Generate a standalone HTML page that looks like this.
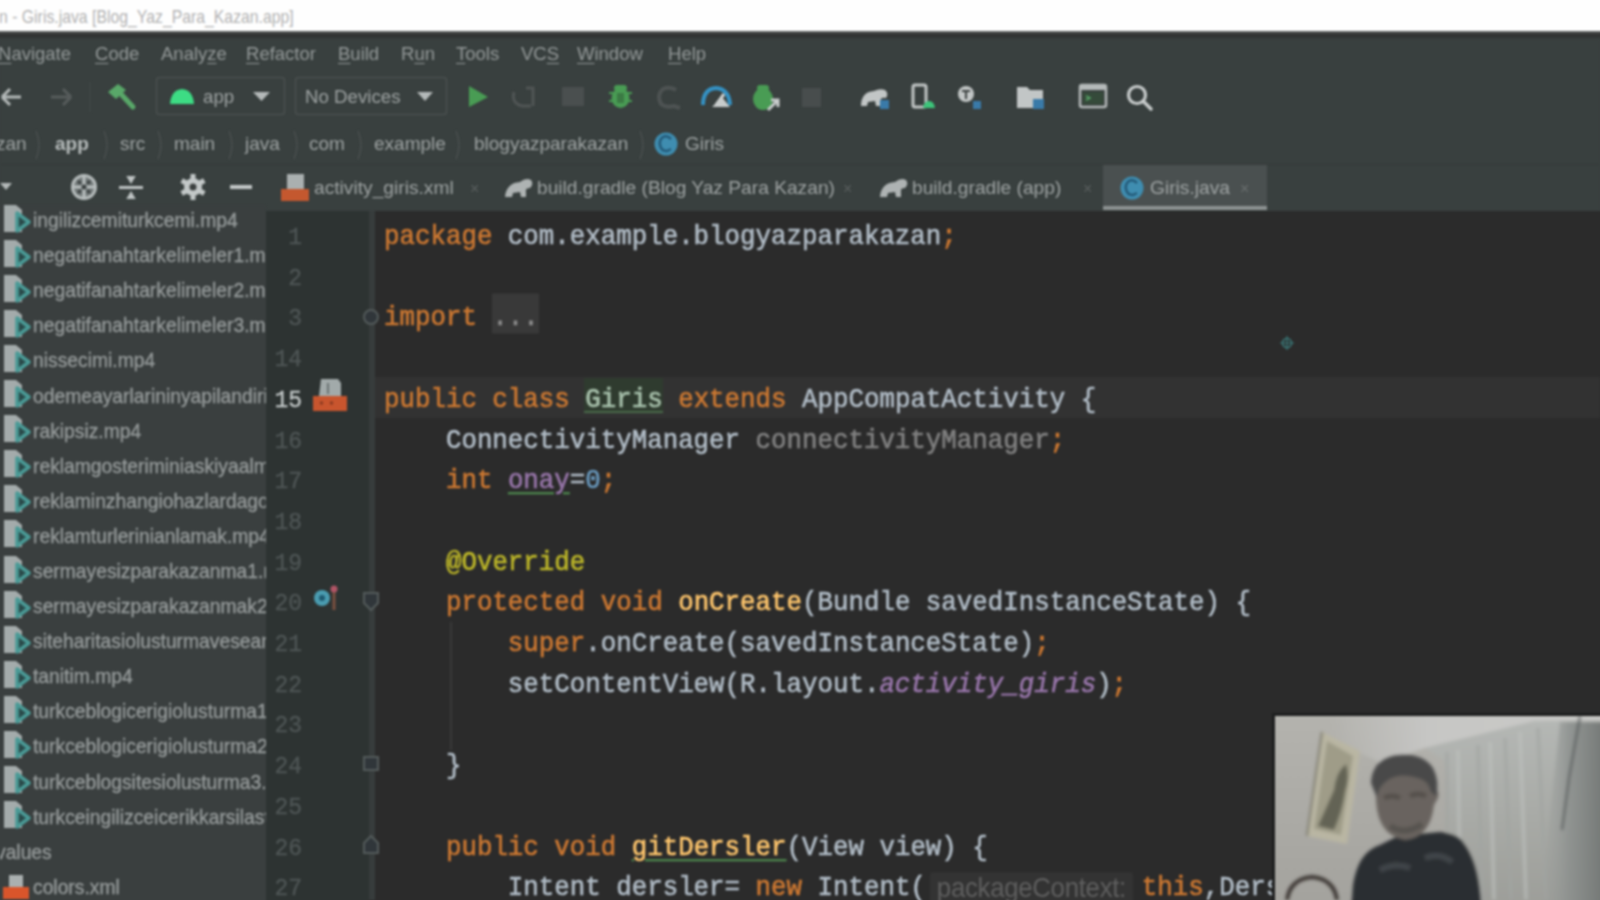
<!DOCTYPE html>
<html><head><meta charset="utf-8">
<style>
*{margin:0;padding:0;box-sizing:border-box}
html,body{width:1600px;height:900px;overflow:hidden;background:#39403f;font-family:"Liberation Sans",sans-serif}
.abs{position:absolute}
#root{position:absolute;left:-12px;top:-12px;width:1624px;height:924px;overflow:hidden;filter:blur(1.1px)}
#inner{position:absolute;left:12px;top:12px;width:1600px;height:900px}
#title{left:0;top:0;width:1600px;height:31px;background:#fefefe}
#title span{position:absolute;left:-1px;top:8px;font-size:15.8px;color:#b2b2b2;white-space:nowrap;transform:scaleY(1.12);transform-origin:0 50%}
#tborder{left:-12px;top:31px;width:1624px;height:8px;background:linear-gradient(#6a6c6c,#2f3131 40%,#333636 80%,#39403f)}
.menu{position:absolute;top:43px;font-size:18.5px;color:#949999;white-space:nowrap}
.menu u{text-underline-offset:3px}
.ui{position:absolute;font-size:18.5px;color:#9ea3a3;white-space:nowrap}
#editor{left:375px;top:211px;width:1225px;height:689px;background:#2b2b2b}
#gutter{left:266px;top:211px;width:103px;height:689px;background:#2d3332}
#gline{left:369px;top:211px;width:6px;height:689px;background:#373c3c}
#tree{left:0;top:205px;width:266px;height:695px;background:#3a3f3f}
.code{position:absolute;left:384px;font-family:"Liberation Mono",monospace;font-size:25.8px;color:#b1bcc6;white-space:pre;line-height:40px;margin-top:2px;-webkit-text-stroke:0.6px currentColor;transform:scaleY(1.08);transform-origin:0 70%}
.ln{position:absolute;margin-top:2px;width:36px;left:266px;text-align:right;font-family:"Liberation Mono",monospace;font-size:23px;color:#4f5656;line-height:40px;-webkit-text-stroke:0.3px currentColor}
.k{color:#cc7832}
.f{color:#9876aa}
.m{color:#ffc66d}
.n{color:#6897bb}
.an{color:#bbb529}
.gr{color:#808080}
.fold{background:#393939;color:#8c8c8c;padding-top:8px}
.cls{color:#a9c2ad}
.wav{text-decoration:underline;text-decoration-color:#4f8a4f;text-underline-offset:4px}
.hint{display:inline-block;vertical-align:top;margin:5px 9px 0 4px;width:203px;height:32px;line-height:28px;background:#333333;color:#5f5f5f;font-family:"Liberation Sans";font-size:25.8px;letter-spacing:-0.3px;-webkit-text-stroke:0;border-radius:3px;padding:0 0 0 7px;overflow:hidden}
.fname{position:absolute;margin-top:1.5px;left:33px;font-size:19.3px;color:#959a9a;white-space:nowrap;line-height:24px;-webkit-text-stroke:0.35px currentColor}
</style></head><body><div id="root"><div id="inner">
<div class="abs" style="left:-12px;top:-12px;width:1624px;height:43px;background:#fefefe"></div>
<div class="abs" style="left:-12px;top:39px;width:12px;height:900px;background:#39403f"></div>
<div class="abs" style="left:1600px;top:39px;width:12px;height:172px;background:#39403f"></div>
<div class="abs" style="left:1600px;top:211px;width:12px;height:502px;background:#2b2b2b"></div>
<div class="abs" style="left:1600px;top:713px;width:12px;height:200px;background:#7a7e7c"></div>
<div class="abs" style="left:-12px;top:900px;width:278px;height:12px;background:#3a3f3f"></div>
<div class="abs" style="left:266px;top:900px;width:103px;height:12px;background:#2d3332"></div>
<div class="abs" style="left:369px;top:900px;width:903px;height:12px;background:#2b2b2b"></div>
<div class="abs" style="left:1272px;top:900px;width:340px;height:12px;background:#9a9a96"></div>

<div id="title" class="abs"><span>n - Giris.java [Blog_Yaz_Para_Kazan.app]</span></div>
<div id="tborder" class="abs"></div>

<div class="menu" style="left:-2px"><u>N</u>avigate</div>
<div class="menu" style="left:95px"><u>C</u>ode</div>
<div class="menu" style="left:161px">Analy<u>z</u>e</div>
<div class="menu" style="left:246px"><u>R</u>efactor</div>
<div class="menu" style="left:338px"><u>B</u>uild</div>
<div class="menu" style="left:401px">R<u>u</u>n</div>
<div class="menu" style="left:456px"><u>T</u>ools</div>
<div class="menu" style="left:521px">VC<u>S</u></div>
<div class="menu" style="left:577px"><u>W</u>indow</div>
<div class="menu" style="left:668px"><u>H</u>elp</div>


<!-- toolbar -->
<svg class="abs" style="left:0;top:70px" width="1200" height="52" viewBox="0 70 1200 52">
 <!-- back arrow -->
 <path d="M2 97 H21 M2 97 L10 89 M2 97 L10 105" stroke="#b4b9b9" stroke-width="3" fill="none"/>
 <!-- forward arrow disabled -->
 <path d="M51 97 H71 M71 97 L63 89 M71 97 L63 105" stroke="#575c5c" stroke-width="3" fill="none"/>
 <line x1="90" y1="82" x2="90" y2="112" stroke="#454a4a" stroke-width="1"/>
 <!-- hammer -->
 <path d="M120 93 L133 107" stroke="#59a869" stroke-width="5" stroke-linecap="round"/>
 <path d="M108 92 L118 84 L126 90 L116 99 Z" fill="#59a869"/>
 <!-- app box -->
 <rect x="156.5" y="77.5" width="128" height="37" rx="3" fill="none" stroke="#4b5050" stroke-width="1.5"/>
 <path d="M170 104 Q171 90 182 89 Q193 90 194 104 Z" fill="#3ddc84"/>
 <path d="M253 92 H270 L261.5 101 Z" fill="#b4b9b9"/>
 <!-- no devices box -->
 <rect x="295.5" y="77.5" width="151" height="37" rx="3" fill="none" stroke="#4b5050" stroke-width="1.5"/>
 <path d="M417 92 H433 L425 101 Z" fill="#b4b9b9"/>
 <!-- run -->
 <path d="M469 86 L488 97 L469 107 Z" fill="#499c54"/>
 <!-- apply changes disabled -->
 <path d="M514 92 Q511 103 522 106 L531 106 M526 88 L533 88 L533 106" stroke="#505555" stroke-width="3" fill="none"/>
 <rect x="562" y="87" width="22" height="19" fill="#4a4f4f"/>
 <!-- debug -->
 <ellipse cx="620.5" cy="98" rx="9" ry="10" fill="#499c54"/>
 <rect x="614" y="85" width="13" height="6" rx="3" fill="#499c54"/>
 <path d="M609 93 H632 M609 101 H632" stroke="#499c54" stroke-width="2"/>
 <rect x="617" y="93" width="7" height="10" fill="#3b7a44"/>
 <!-- disabled G -->
 <path d="M676 90 Q670 86 663 89 Q656 95 661 104 Q666 108 674 106 L680 108" stroke="#4e5353" stroke-width="4" fill="none"/>
 <!-- profiler -->
 <path d="M703 105 Q703 89 716 88 Q729 89 730 105" stroke="#3592c4" stroke-width="4" fill="none"/>
 <path d="M716 105 L724 94" stroke="#d0d4d4" stroke-width="3"/>
 <path d="M722 97 L730 107 L712 107 Z" fill="#c8cccc"/>
 <!-- attach debugger -->
 <ellipse cx="763" cy="99" rx="10" ry="11" fill="#499c54"/>
 <rect x="757" y="85" width="12" height="6" rx="3" fill="#499c54"/>
 <path d="M768 110 L778 100 M771 100 H778 V107" stroke="#c8cccc" stroke-width="3" fill="none"/>
 <!-- stop disabled -->
 <rect x="802" y="88" width="19" height="19" fill="#484d4d"/>
 <!-- gradle sync elephant -->
 <path d="M861 106 Q861 92 874 91 Q880 88 885 90 Q889 93 886 98 Q880 97 881 101 L881 106 L876 106 L875 101 L868 102 L867 106 Z" fill="#c2c6c6"/>
 <rect x="880" y="100" width="9" height="9" fill="#3a7aa8"/>
 <!-- AVD -->
 <rect x="913" y="85" width="13" height="22" rx="2" fill="none" stroke="#c2c6c6" stroke-width="3"/>
 <path d="M923 108 Q924 101 929 101 Q934 101 935 108 Z" fill="#3dc47a"/>
 <!-- SDK -->
 <circle cx="966" cy="94" r="8" fill="#c2c6c6"/>
 <path d="M962 91 H970 M966 91 V99" stroke="#3b403f" stroke-width="2"/>
 <rect x="973" y="101" width="8" height="8" fill="#3a7aa8"/>
 <!-- project structure -->
 <path d="M1017 87 H1027 L1030 90 H1043 V108 H1017 Z" fill="#c2c6c6"/>
 <rect x="1033" y="99" width="11" height="10" fill="#3a7aa8"/>
 <!-- terminal window -->
 <rect x="1080" y="85" width="26" height="22" rx="2" fill="none" stroke="#b4b9b9" stroke-width="2.5"/>
 <rect x="1080" y="85" width="26" height="5" fill="#b4b9b9"/>
 <rect x="1083" y="92" width="20" height="12" fill="#354a3a"/>
 <path d="M1086 96 L1090 98 L1086 100" stroke="#59a869" stroke-width="1.5" fill="none"/>
 <!-- search -->
 <circle cx="1137" cy="95" r="8.5" fill="none" stroke="#c8cccc" stroke-width="3.2"/>
 <path d="M1143 101 L1151 109" stroke="#c8cccc" stroke-width="3.5" stroke-linecap="round"/>
</svg>
<div class="ui" style="left:203px;top:86px;font-size:18.7px">app</div>
<div class="ui" style="left:305px;top:86px;font-size:18.7px">No Devices</div>


<!-- breadcrumb -->
<div class="ui" style="left:-4px;top:133px;font-size:19px">zan</div>
<div class="ui" style="left:55px;top:133px;font-size:19px;font-weight:bold;color:#b8bdbd">app</div>
<div class="ui" style="left:120px;top:133px;font-size:19px">src</div>
<div class="ui" style="left:174px;top:133px;font-size:19px">main</div>
<div class="ui" style="left:245px;top:133px;font-size:19px">java</div>
<div class="ui" style="left:309px;top:133px;font-size:19px">com</div>
<div class="ui" style="left:374px;top:133px;font-size:19px">example</div>
<div class="ui" style="left:474px;top:133px;font-size:19px">blogyazparakazan</div>
<div class="ui" style="left:685px;top:133px;font-size:19px">Giris</div>
<svg class="abs" style="left:0;top:120px" width="800" height="50" viewBox="0 120 800 50">
 <g stroke="#4a4f4f" stroke-width="1.5" fill="none">
  <path d="M36 131 Q42 145 36 159"/><path d="M104 131 Q110 145 104 159"/><path d="M158 131 Q164 145 158 159"/>
  <path d="M229 131 Q235 145 229 159"/><path d="M294 131 Q300 145 294 159"/><path d="M358 131 Q364 145 358 159"/>
  <path d="M456 131 Q462 145 456 159"/><path d="M640 131 Q646 145 640 159"/>
 </g>
 <circle cx="666" cy="144" r="11.5" fill="#3f8db0"/>
 <path d="M671 139 Q667 135 663 137 Q659 140 660 145 Q661 151 667 151 L671 149" stroke="#245a78" stroke-width="2.5" fill="none"/>
</svg>
<div class="abs" style="left:0;top:164px;width:1600px;height:1px;background:#363a3a"></div>

<!-- project tool row icons -->
<svg class="abs" style="left:0;top:165px" width="270" height="46" viewBox="0 165 270 46">
 <path d="M0 183 H12 L6 190 Z" fill="#b4b9b9"/>
 <circle cx="84" cy="187" r="13" fill="#b4baba"/>
 <circle cx="84" cy="187" r="10" fill="#6f7676"/>
 <path d="M84 175 V199 M72 187 H96" stroke="#b8bebe" stroke-width="3"/>
 <g fill="#3a4040">
  <path d="M77 180 L82 182 L79 185 Z"/><path d="M91 180 L86 182 L89 185 Z"/>
  <path d="M77 194 L82 192 L79 189 Z"/><path d="M91 194 L86 192 L89 189 Z"/>
  <circle cx="84" cy="187" r="2.5"/>
 </g>
 <path d="M119 187.5 H143" stroke="#bfc4c4" stroke-width="3"/>
 <path d="M128 177 L131 182 L134 177 Z M128 198 L131 193 L134 198 Z" fill="#bfc4c4" stroke="#bfc4c4" stroke-width="2"/>
 <g transform="translate(193 187)">
  <circle r="9" fill="#c3c8c8"/>
  <path d="M0 -13 V13 M-11.3 -6.5 L11.3 6.5 M-11.3 6.5 L11.3 -6.5" stroke="#c3c8c8" stroke-width="5"/>
  <circle r="3.5" fill="#3b403f"/>
 </g>
 <path d="M230 187 H252" stroke="#c3c8c8" stroke-width="4"/>
</svg>

<!-- tabs -->
<svg class="abs" style="left:270px;top:165px" width="1000" height="48" viewBox="270 165 1000 48">
 <!-- xml icon -->
 <path d="M287 174 H304 V190 H287 Z" fill="#aab0b0"/>
 <rect x="281" y="189" width="28" height="12" fill="#c4582f"/>
 <text x="470" y="194" font-size="16" fill="#5a5f5f" font-family="Liberation Sans">×</text>
 <!-- gradle elephant -->
 <path d="M505 197 Q506 183 520 182 Q526 177 531 180 Q534 184 530 188 Q525 188 526 192 L526 197 L521 197 L520 192 L513 193 L512 197 Z" fill="#aeb3b3"/>
 <text x="843" y="194" font-size="16" fill="#5a5f5f" font-family="Liberation Sans">×</text>
 <path d="M880 197 Q881 183 895 182 Q901 177 906 180 Q909 184 905 188 Q900 188 901 192 L901 197 L896 197 L895 192 L888 193 L887 197 Z" fill="#aeb3b3"/>
 <text x="1083" y="194" font-size="16" fill="#5a5f5f" font-family="Liberation Sans">×</text>
 <!-- selected tab -->
 <rect x="1103" y="165" width="164" height="45" fill="#4a5050"/>
 <rect x="1103" y="206" width="164" height="4" fill="#8d9292"/>
 <circle cx="1132" cy="188" r="11.5" fill="#3f8db0"/>
 <path d="M1137 183 Q1133 179 1129 181 Q1125 184 1126 189 Q1127 195 1133 195 L1137 193" stroke="#245a78" stroke-width="2.5" fill="none"/>
 <text x="1240" y="194" font-size="16" fill="#6a6f6f" font-family="Liberation Sans">×</text>
</svg>
<div class="ui" style="left:314px;top:177px;font-size:19.2px">activity_giris.xml</div>
<div class="ui" style="left:537px;top:177px;font-size:19.2px">build.gradle (Blog Yaz Para Kazan)</div>
<div class="ui" style="left:912px;top:177px;font-size:19.2px">build.gradle (app)</div>
<div class="ui" style="left:1150px;top:177px;font-size:19.2px">Giris.java</div>

<div id="tree" class="abs"></div>
<div id="gutter" class="abs"></div>
<div id="gline" class="abs"></div>
<div id="editor" class="abs"></div>

<div class="abs" style="left:375px;top:377px;width:1225px;height:41px;background:#323232"></div>
<div class="abs" style="left:584px;top:378px;width:79px;height:35px;background:#2f3b2f;border-bottom:2px solid #4a6a4a"></div>
<!-- project tree -->
<div class="abs" style="left:0;top:205px;width:266px;height:695px;overflow:hidden">
<svg class="abs" style="left:0;top:-2.0px" width="32" height="32" viewBox="0 0 32 32"><path d="M4 2 H16 L22 7 V29 H4 Z" fill="#a4abab"/><path d="M17 10 L29 19 L17 28 Z" fill="#2a4a4a" stroke="#4a9a96" stroke-width="3.5" stroke-linejoin="round"/></svg>
<div class="fname" style="top:2px">ingilizcemiturkcemi.mp4</div>
<svg class="abs" style="left:0;top:33.0px" width="32" height="32" viewBox="0 0 32 32"><path d="M4 2 H16 L22 7 V29 H4 Z" fill="#a4abab"/><path d="M17 10 L29 19 L17 28 Z" fill="#2a4a4a" stroke="#4a9a96" stroke-width="3.5" stroke-linejoin="round"/></svg>
<div class="fname" style="top:37px">negatifanahtarkelimeler1.mp4</div>
<svg class="abs" style="left:0;top:68.0px" width="32" height="32" viewBox="0 0 32 32"><path d="M4 2 H16 L22 7 V29 H4 Z" fill="#a4abab"/><path d="M17 10 L29 19 L17 28 Z" fill="#2a4a4a" stroke="#4a9a96" stroke-width="3.5" stroke-linejoin="round"/></svg>
<div class="fname" style="top:72px">negatifanahtarkelimeler2.mp4</div>
<svg class="abs" style="left:0;top:103.0px" width="32" height="32" viewBox="0 0 32 32"><path d="M4 2 H16 L22 7 V29 H4 Z" fill="#a4abab"/><path d="M17 10 L29 19 L17 28 Z" fill="#2a4a4a" stroke="#4a9a96" stroke-width="3.5" stroke-linejoin="round"/></svg>
<div class="fname" style="top:107px">negatifanahtarkelimeler3.mp4</div>
<svg class="abs" style="left:0;top:138.0px" width="32" height="32" viewBox="0 0 32 32"><path d="M4 2 H16 L22 7 V29 H4 Z" fill="#a4abab"/><path d="M17 10 L29 19 L17 28 Z" fill="#2a4a4a" stroke="#4a9a96" stroke-width="3.5" stroke-linejoin="round"/></svg>
<div class="fname" style="top:142px">nissecimi.mp4</div>
<svg class="abs" style="left:0;top:173.0px" width="32" height="32" viewBox="0 0 32 32"><path d="M4 2 H16 L22 7 V29 H4 Z" fill="#a4abab"/><path d="M17 10 L29 19 L17 28 Z" fill="#2a4a4a" stroke="#4a9a96" stroke-width="3.5" stroke-linejoin="round"/></svg>
<div class="fname" style="top:178px">odemeayarlarininyapilandirilmasi.mp4</div>
<svg class="abs" style="left:0;top:208.0px" width="32" height="32" viewBox="0 0 32 32"><path d="M4 2 H16 L22 7 V29 H4 Z" fill="#a4abab"/><path d="M17 10 L29 19 L17 28 Z" fill="#2a4a4a" stroke="#4a9a96" stroke-width="3.5" stroke-linejoin="round"/></svg>
<div class="fname" style="top:213px">rakipsiz.mp4</div>
<svg class="abs" style="left:0;top:243.0px" width="32" height="32" viewBox="0 0 32 32"><path d="M4 2 H16 L22 7 V29 H4 Z" fill="#a4abab"/><path d="M17 10 L29 19 L17 28 Z" fill="#2a4a4a" stroke="#4a9a96" stroke-width="3.5" stroke-linejoin="round"/></svg>
<div class="fname" style="top:248px">reklamgosteriminiaskiyaalma.mp4</div>
<svg class="abs" style="left:0;top:278.0px" width="32" height="32" viewBox="0 0 32 32"><path d="M4 2 H16 L22 7 V29 H4 Z" fill="#a4abab"/><path d="M17 10 L29 19 L17 28 Z" fill="#2a4a4a" stroke="#4a9a96" stroke-width="3.5" stroke-linejoin="round"/></svg>
<div class="fname" style="top:283px">reklaminzhangiohazlardagosterilir.mp4</div>
<svg class="abs" style="left:0;top:313.0px" width="32" height="32" viewBox="0 0 32 32"><path d="M4 2 H16 L22 7 V29 H4 Z" fill="#a4abab"/><path d="M17 10 L29 19 L17 28 Z" fill="#2a4a4a" stroke="#4a9a96" stroke-width="3.5" stroke-linejoin="round"/></svg>
<div class="fname" style="top:318px">reklamturlerinianlamak.mp4</div>
<svg class="abs" style="left:0;top:349.0px" width="32" height="32" viewBox="0 0 32 32"><path d="M4 2 H16 L22 7 V29 H4 Z" fill="#a4abab"/><path d="M17 10 L29 19 L17 28 Z" fill="#2a4a4a" stroke="#4a9a96" stroke-width="3.5" stroke-linejoin="round"/></svg>
<div class="fname" style="top:353px">sermayesizparakazanma1.mp4</div>
<svg class="abs" style="left:0;top:384.0px" width="32" height="32" viewBox="0 0 32 32"><path d="M4 2 H16 L22 7 V29 H4 Z" fill="#a4abab"/><path d="M17 10 L29 19 L17 28 Z" fill="#2a4a4a" stroke="#4a9a96" stroke-width="3.5" stroke-linejoin="round"/></svg>
<div class="fname" style="top:388px">sermayesizparakazanmak2.mp4</div>
<svg class="abs" style="left:0;top:419.0px" width="32" height="32" viewBox="0 0 32 32"><path d="M4 2 H16 L22 7 V29 H4 Z" fill="#a4abab"/><path d="M17 10 L29 19 L17 28 Z" fill="#2a4a4a" stroke="#4a9a96" stroke-width="3.5" stroke-linejoin="round"/></svg>
<div class="fname" style="top:423px">siteharitasiolusturmavesearch.mp4</div>
<svg class="abs" style="left:0;top:454.0px" width="32" height="32" viewBox="0 0 32 32"><path d="M4 2 H16 L22 7 V29 H4 Z" fill="#a4abab"/><path d="M17 10 L29 19 L17 28 Z" fill="#2a4a4a" stroke="#4a9a96" stroke-width="3.5" stroke-linejoin="round"/></svg>
<div class="fname" style="top:458px">tanitim.mp4</div>
<svg class="abs" style="left:0;top:489.0px" width="32" height="32" viewBox="0 0 32 32"><path d="M4 2 H16 L22 7 V29 H4 Z" fill="#a4abab"/><path d="M17 10 L29 19 L17 28 Z" fill="#2a4a4a" stroke="#4a9a96" stroke-width="3.5" stroke-linejoin="round"/></svg>
<div class="fname" style="top:493px">turkceblogicerigiolusturma1.mp4</div>
<svg class="abs" style="left:0;top:524.0px" width="32" height="32" viewBox="0 0 32 32"><path d="M4 2 H16 L22 7 V29 H4 Z" fill="#a4abab"/><path d="M17 10 L29 19 L17 28 Z" fill="#2a4a4a" stroke="#4a9a96" stroke-width="3.5" stroke-linejoin="round"/></svg>
<div class="fname" style="top:528px">turkceblogicerigiolusturma2.mp4</div>
<svg class="abs" style="left:0;top:559.0px" width="32" height="32" viewBox="0 0 32 32"><path d="M4 2 H16 L22 7 V29 H4 Z" fill="#a4abab"/><path d="M17 10 L29 19 L17 28 Z" fill="#2a4a4a" stroke="#4a9a96" stroke-width="3.5" stroke-linejoin="round"/></svg>
<div class="fname" style="top:564px">turkceblogsitesiolusturma3.mp4</div>
<svg class="abs" style="left:0;top:594.0px" width="32" height="32" viewBox="0 0 32 32"><path d="M4 2 H16 L22 7 V29 H4 Z" fill="#a4abab"/><path d="M17 10 L29 19 L17 28 Z" fill="#2a4a4a" stroke="#4a9a96" stroke-width="3.5" stroke-linejoin="round"/></svg>
<div class="fname" style="top:599px">turkceingilizceicerikkarsilastirma.mp4</div>
<div class="fname" style="left:-4px;top:634px">values</div>
<svg class="abs" style="left:3px;top:667px" width="28" height="28" viewBox="0 0 28 28"><path d="M6 3 H20 V16 H6 Z" fill="#aab0b0"/><rect x="0" y="15" width="26" height="12" fill="#d9552b"/></svg>
<div class="fname" style="top:669px">colors.xml</div>
</div>
<div class="ln" style="top:216.0px">1</div>
<div class="ln" style="top:256.7px">2</div>
<div class="ln" style="top:297.4px">3</div>
<div class="ln" style="top:338.1px">14</div>
<div class="ln" style="top:378.8px;color:#c5caca">15</div>
<div class="ln" style="top:419.5px">16</div>
<div class="ln" style="top:460.2px">17</div>
<div class="ln" style="top:500.9px">18</div>
<div class="ln" style="top:541.6px">19</div>
<div class="ln" style="top:582.3px">20</div>
<div class="ln" style="top:623.0px">21</div>
<div class="ln" style="top:663.7px">22</div>
<div class="ln" style="top:704.4px">23</div>
<div class="ln" style="top:745.1px">24</div>
<div class="ln" style="top:785.8px">25</div>
<div class="ln" style="top:826.5px">26</div>
<div class="ln" style="top:867.2px">27</div>
<div class="code" style="top:216.0px"><span class="k">package</span> com.example.blogyazparakazan<span class="k">;</span></div>
<div class="code" style="top:256.7px"></div>
<div class="code" style="top:297.4px"><span class="k">import</span> <span class="fold">...</span></div>
<div class="code" style="top:338.1px"></div>
<div class="code" style="top:378.8px"><span class="k">public class</span> <span class="cls">Giris</span> <span class="k">extends</span> AppCompatActivity {</div>
<div class="code" style="top:419.5px">    ConnectivityManager <span class="gr">connectivityManager</span><span class="k">;</span></div>
<div class="code" style="top:460.2px">    <span class="k">int</span> <span class="f wav">onay</span>=<span class="n">0</span><span class="k">;</span></div>
<div class="code" style="top:500.9px"></div>
<div class="code" style="top:541.6px">    <span class="an">@Override</span></div>
<div class="code" style="top:582.3px">    <span class="k">protected void</span> <span class="m">onCreate</span>(Bundle savedInstanceState) {</div>
<div class="code" style="top:623.0px">        <span class="k">super</span>.onCreate(savedInstanceState)<span class="k">;</span></div>
<div class="code" style="top:663.7px">        setContentView(R.layout.<span class="f" style="font-style:italic">activity_giris</span>)<span class="k">;</span></div>
<div class="code" style="top:704.4px"></div>
<div class="code" style="top:745.1px">    }</div>
<div class="code" style="top:785.8px"></div>
<div class="code" style="top:826.5px">    <span class="k">public void</span> <span class="m wav">gitDersler</span>(View view) {</div>
<div class="code" style="top:867.2px">        Intent dersler= <span class="k">new</span> Intent(<span class="hint">packageContext:</span><span class="k">this</span>,Dersler.<span class="k">class</span>)<span class="k">;</span></div>


<!-- gutter icons -->
<svg class="abs" style="left:266px;top:211px" width="120" height="689" viewBox="266 211 120 689">
 <!-- line 15 layout icon -->
 <path d="M321 379 H338 L341 383 V396 H319 Z" fill="#a2aaaa"/>
 <path d="M328 383 V394" stroke="#6a7272" stroke-width="2"/>
 <rect x="313" y="396" width="34" height="15" fill="#c8552e"/>
 <path d="M320 403 H340" stroke="#8a3a20" stroke-width="3" stroke-dasharray="3 7"/>
 <!-- line 20 override icon -->
 <circle cx="322" cy="598" r="8" fill="#4a9cb0"/>
 <circle cx="322" cy="598" r="3" fill="#1f5a70"/>
 <path d="M334 592 V610" stroke="#7a5040" stroke-width="3"/>
 <circle cx="334" cy="589" r="3.5" fill="#b05566"/>
 <!-- fold markers -->
 <g fill="#30363a" stroke="#535a5a" stroke-width="2">
  <circle cx="371" cy="317" r="7"/>
  <path d="M364 593 h14 v10 l-7 7 l-7 -7 Z"/>
  <path d="M364 757 h14 v13 h-14 Z"/>
  <path d="M364 853 v-10 l7 -7 l7 7 v10 Z"/>
 </g>
</svg>
<div class="abs" style="left:450px;top:622px;width:2px;height:128px;background:#393939"></div>
<!-- editor crosshair -->
<svg class="abs" style="left:1279px;top:335px" width="16" height="16" viewBox="0 0 16 16">
 <circle cx="8" cy="8" r="4.5" fill="none" stroke="#3b7a7a" stroke-width="1.5"/>
 <path d="M8 1 V15 M1 8 H15" stroke="#3b7a7a" stroke-width="1.2"/>
</svg>

<!-- webcam -->
<div class="abs" style="left:1272px;top:713px;width:340px;height:200px;background:#1e1f1f"></div>
<svg class="abs" style="left:1275px;top:716px" width="337" height="196" viewBox="1275 716 337 196">
 <defs>
  <filter id="bl" x="-20%" y="-20%" width="140%" height="140%"><feGaussianBlur stdDeviation="1.8"/></filter>
  <linearGradient id="wall" x1="0" y1="0" x2="0" y2="1"><stop offset="0" stop-color="#b4b3ae"/><stop offset="1" stop-color="#a3a29d"/></linearGradient>
  <linearGradient id="curt" x1="0" y1="0" x2="0" y2="1"><stop offset="0" stop-color="#b4b7b4"/><stop offset="1" stop-color="#9c9d98"/></linearGradient>
  <linearGradient id="ceil" x1="0" y1="0" x2="1" y2="0"><stop offset="0" stop-color="#c6c6c4" stop-opacity="0"/><stop offset="0.35" stop-color="#c6c6c4"/><stop offset="1" stop-color="#cacac8"/></linearGradient>
  <linearGradient id="rside" x1="0" y1="0" x2="1" y2="0"><stop offset="0" stop-color="#9a9e9c" stop-opacity="0"/><stop offset="0.4" stop-color="#8a8e8c" stop-opacity="0.8"/><stop offset="1" stop-color="#6c706e"/></linearGradient>
 </defs>
 <rect x="1275" y="716" width="337" height="196" fill="url(#wall)"/>
 <g filter="url(#bl)">
  <!-- upper light wall / ceiling -->
  <path d="M1330 716 H1612 V720 L1535 721 L1425 748 L1380 762 L1330 740 Z" fill="url(#ceil)"/>
  <!-- curtain -->
  <path d="M1425 748 L1535 721 L1612 721 V912 H1462 L1450 835 L1444 760 Z" fill="url(#curt)"/>
  <g stroke="#a2a5a2" stroke-width="3" opacity="0.8" fill="none">
   <path d="M1447 752 V900"/><path d="M1478 745 L1482 900"/><path d="M1505 738 L1511 900"/><path d="M1538 728 L1546 900"/>
  </g>
  <g stroke="#c0c3c0" stroke-width="3" opacity="0.7" fill="none">
   <path d="M1458 750 L1460 900"/><path d="M1490 742 L1494 900"/><path d="M1520 732 L1526 900"/>
  </g>
  <path d="M1560 722 L1612 722 V912 H1540 L1548 830 Z" fill="url(#rside)"/>
  <path d="M1580 716 L1569 778 L1562 830" stroke="#5a5e5e" stroke-width="2.2" fill="none"/>
  <!-- picture frame -->
  <path d="M1322 732 L1360 751 L1347 844 L1307 836 Z" fill="#b9b6a3"/>
  <path d="M1327 741 L1353 756 L1341 835 L1314 829 Z" fill="#9f9c88"/>
  <path d="M1346 764 Q1336 772 1334 790 Q1326 808 1318 826 L1334 830 Q1342 812 1345 792 Q1350 776 1346 764 Z" fill="#646454"/>
  <path d="M1307 836 L1322 732" stroke="#7a786a" stroke-width="2"/>
  <!-- chair -->
  <path d="M1287 900 Q1290 879 1312 877 Q1334 879 1337 900" fill="none" stroke="#3a3530" stroke-width="4"/>
  <!-- body -->
  <path d="M1351 912 L1353 885 Q1358 852 1380 845 L1398 836 L1440 832 Q1458 834 1463 842 Q1478 860 1481 900 L1482 912 Z" fill="#292d32"/>
  <path d="M1380 870 Q1395 862 1410 868 M1425 858 Q1440 852 1452 862" stroke="#40444a" stroke-width="6" fill="none"/>
  <!-- head -->
  <path d="M1376 790 Q1374 835 1405 840 Q1430 838 1434 805 L1438 798 Q1440 790 1433 788 Q1432 770 1420 762 Q1400 754 1385 762 Q1372 770 1376 790 Z" fill="#69645f"/>
  <path d="M1371 783 Q1372 760 1395 755 Q1422 752 1433 768 Q1440 782 1436 796 L1431 792 Q1428 780 1418 778 Q1400 772 1388 780 Q1378 786 1377 798 Z" fill="#48484a"/>
  <path d="M1384 798 Q1392 794 1400 798 M1410 796 Q1418 792 1426 796" stroke="#54504c" stroke-width="5" fill="none"/>
  <path d="M1390 826 Q1405 836 1422 824" stroke="#57534f" stroke-width="6" fill="none"/>
 </g>
</svg>

</div></div></body></html>
